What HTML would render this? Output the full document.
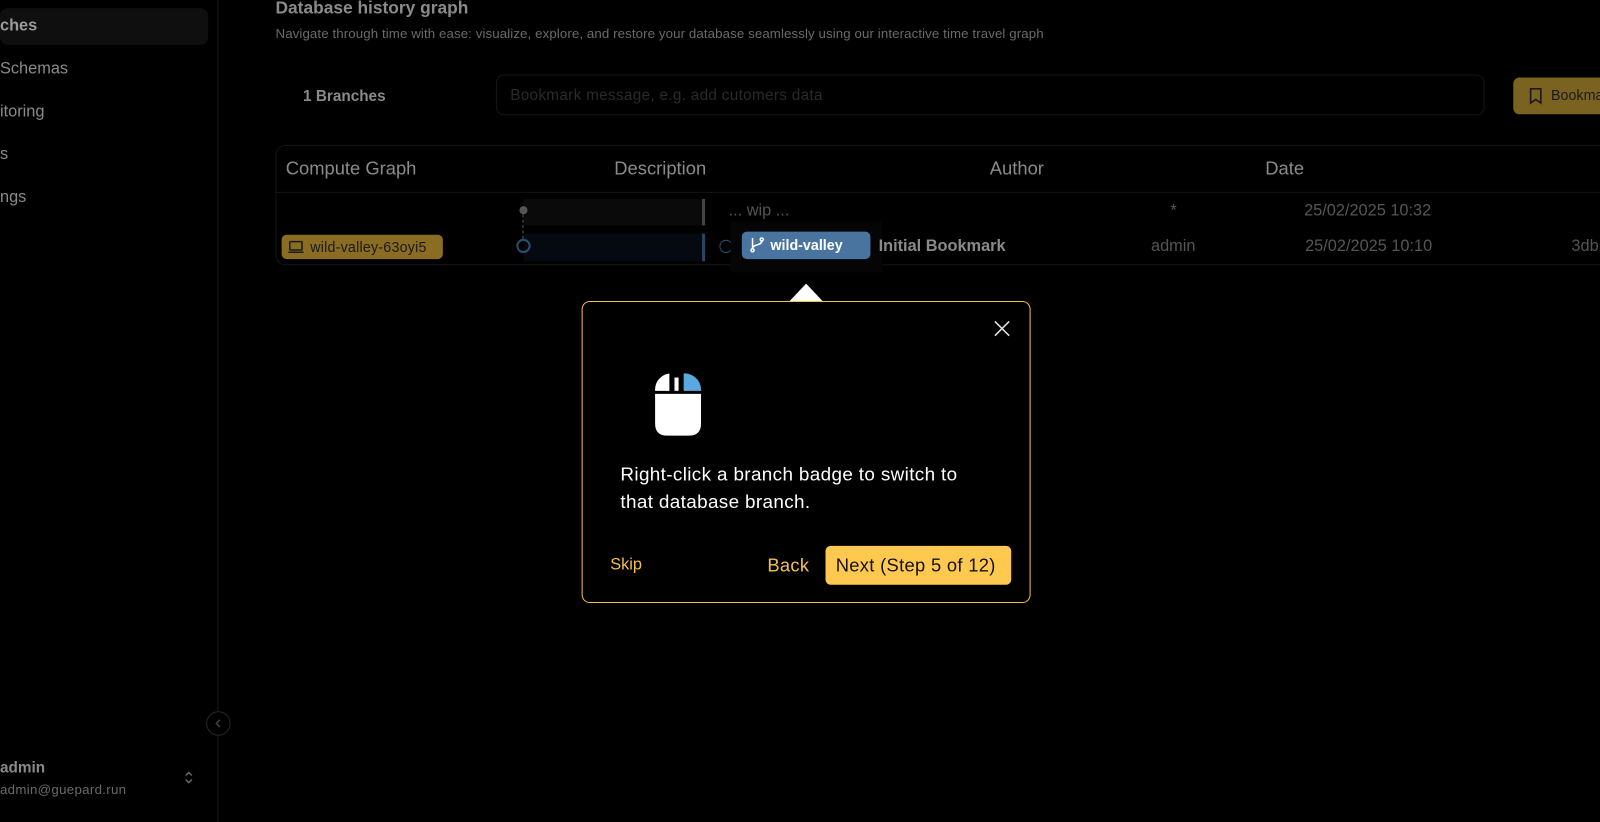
<!DOCTYPE html>
<html><head><meta charset="utf-8"><style>
*{box-sizing:border-box;margin:0;padding:0}
body{width:1600px;height:806px;background:#000;font-family:"Liberation Sans",sans-serif;position:relative;overflow:hidden;color:#888}
#w{position:absolute;left:0;top:0;width:1568px;height:790px;transform:scale(1.0204);transform-origin:0 0}
.a{position:absolute;white-space:nowrap}
</style></head><body><div id="w">
<div class="a" style="left:0;top:8px;width:204px;height:36px;background:#0f0f0f;border-radius:8px"></div>
<div class="a" style="left:0;top:17px;font-size:16px;font-weight:bold;color:#9a9a9a">ches</div>
<div class="a" style="left:0;top:59px;font-size:16px;color:#8a8a8a">Schemas</div>
<div class="a" style="left:0;top:101px;font-size:16px;color:#8a8a8a">itoring</div>
<div class="a" style="left:0;top:143px;font-size:16px;color:#8a8a8a">s</div>
<div class="a" style="left:0;top:185px;font-size:16px;color:#8a8a8a">ngs</div>
<div class="a" style="left:213px;top:0;width:1px;height:806px;background:#161616"></div>
<div class="a" style="left:202px;top:697px;width:24px;height:24px;border:1.5px solid #262626;border-radius:50%;background:#000"></div>
<svg class="a" style="left:207px;top:702px" width="14" height="14" viewBox="0 0 14 14" fill="none" stroke="#444" stroke-width="1.5"><path d="M8.5 3.5L5 7l3.5 3.5"/></svg>
<div class="a" style="left:0;top:744px;font-size:15px;font-weight:bold;color:#8a8a8a">admin</div>
<div class="a" style="left:0;top:766px;font-size:13px;color:#6a6a6a;letter-spacing:0.3px">admin@guepard.run</div>
<svg class="a" style="left:179px;top:754px" width="12" height="16" viewBox="0 0 12 16" fill="none" stroke="#666" stroke-width="1.5"><path d="M3 6l3-3 3 3M3 10l3 3 3-3"/></svg>

<div class="a" style="left:270px;top:-2px;font-size:17px;font-weight:bold;color:#8a8a8a">Database history graph</div>
<div class="a" style="left:270px;top:25px;font-size:13px;color:#6a6a6a;letter-spacing:0.1px">Navigate through time with ease: visualize, explore, and restore your database seamlessly using our interactive time travel graph</div>
<div class="a" style="left:297px;top:86px;font-size:15px;font-weight:bold;color:#8a8a8a">1 Branches</div>
<div class="a" style="left:486px;top:73px;width:969px;height:40px;border:1px solid #151515;border-radius:8px"></div>
<div class="a" style="left:500px;top:85px;font-size:15px;color:#2a2a2a;letter-spacing:0.3px">Bookmark message, e.g. add cutomers data</div>
<div class="a" style="left:1483px;top:76px;width:130px;height:36px;background:#7a6221;border-radius:6px"></div>
<svg class="a" style="left:1497px;top:85px" width="16" height="18" viewBox="0 0 16 18" fill="none" stroke="#1a1a1a" stroke-width="1.6"><path d="M3 2h10v14l-5-3.5L3 16z"/></svg>
<div class="a" style="left:1520px;top:85px;font-size:14px;color:#1a1a1a">Bookma</div>

<div class="a" style="left:270px;top:142px;width:1340px;height:118px;border:1px solid #151515;border-radius:10px"></div>
<div class="a" style="left:270px;top:188px;width:1340px;height:1px;background:#141414"></div>
<div class="a" style="left:280px;top:155px;font-size:18px;color:#8a8a8a">Compute Graph</div>
<div class="a" style="left:602px;top:155px;font-size:18px;color:#8a8a8a">Description</div>
<div class="a" style="left:970px;top:155px;font-size:18px;color:#8a8a8a">Author</div>
<div class="a" style="left:1240px;top:155px;font-size:18px;color:#8a8a8a">Date</div>

<div class="a" style="left:513px;top:195px;width:176px;height:26px;background:#0a0a0a"></div>
<div class="a" style="left:688px;top:195px;width:3px;height:26px;background:#444"></div>
<div class="a" style="left:513px;top:229px;width:176px;height:27px;background:#050a10"></div>
<div class="a" style="left:688px;top:229px;width:3px;height:27px;background:#2a4560"></div>
<div class="a" style="left:509px;top:202px;width:8px;height:8px;border-radius:50%;background:#555"></div>
<div class="a" style="left:512px;top:210px;width:0;height:24px;border-left:1.5px dashed #555"></div>
<div class="a" style="left:506px;top:234px;width:14px;height:14px;border-radius:50%;border:2px solid #2a4c6e"></div>
<div class="a" style="left:705px;top:235px;width:13px;height:13px;border-radius:50%;border:1.5px solid #2a4c6e"></div>
<div class="a" style="left:714px;top:198px;font-size:16px;color:#555">... wip ...</div>
<div class="a" style="left:716px;top:217px;width:148px;height:50px;background:#050505"></div>
<div class="a" style="left:727px;top:227px;width:126px;height:27px;background:#4a74a0;border-radius:5px"></div>
<svg class="a" style="left:733px;top:231px" width="18" height="18" viewBox="0 0 24 24" fill="none" stroke="#fff" stroke-width="2"><circle cx="6" cy="19" r="2"/><circle cx="18" cy="5" r="2"/><path d="M6 3v14M18 7c0 6-12 4-12 10"/></svg>
<div class="a" style="left:755px;top:232px;font-size:14px;font-weight:bold;color:#fff">wild-valley</div>
<div class="a" style="left:861px;top:233px;font-size:16px;font-weight:bold;color:#8a8a8a">Initial Bookmark</div>
<div class="a" style="left:1147px;top:198px;font-size:16px;color:#555">*</div>
<div class="a" style="left:1278px;top:198px;font-size:16px;color:#555">25/02/2025 10:32</div>
<div class="a" style="left:1128px;top:233px;font-size:16px;color:#555">admin</div>
<div class="a" style="left:1279px;top:233px;font-size:16px;color:#555">25/02/2025 10:10</div>
<div class="a" style="left:1540px;top:233px;font-size:16px;color:#555">3db</div>
<div class="a" style="left:276px;top:230px;width:158px;height:24px;background:#8a6d22;border-radius:5px"></div>
<svg class="a" style="left:281px;top:233px" width="18" height="18" viewBox="0 0 24 24" fill="none" stroke="#1a1a1a" stroke-width="2"><rect x="4" y="5" width="16" height="11" rx="1"/><path d="M2 19h20"/></svg>
<div class="a" style="left:304px;top:234px;font-size:14px;color:#1a1a1a;letter-spacing:0.2px">wild-valley-63oyi5</div>

<div class="a" style="left:773px;top:278px;width:0;height:0;border-left:17px solid transparent;border-right:17px solid transparent;border-bottom:18px solid #fff"></div>
<div class="a" style="left:570px;top:295px;width:440px;height:296px;border:1.5px solid #f5c04a;border-radius:8px;background:#000"></div>
<svg class="a" style="left:972px;top:312px" width="20" height="20" viewBox="0 0 20 20" stroke="#ddd" stroke-width="1.6"><path d="M3 3l14 14M17 3L3 17"/></svg>
<svg class="a" style="left:641px;top:363px" width="48" height="64" viewBox="0 0 48 64">
<path d="M1 20 A16 16 0 0 1 15 3 L15 20 Z" fill="#fff"/>
<rect x="20" y="7" width="4" height="13" fill="#fff"/>
<path d="M29 3 A16 16 0 0 1 46 20 L29 20 Z" fill="#5aa8e0"/>
<path d="M1 23 H46 V52 Q46 64 34 64 H13 Q1 64 1 52 Z" fill="#fff"/>
</svg>
<div class="a" style="left:608px;top:451px;font-size:18.5px;color:#fff;line-height:27px;letter-spacing:0.35px;font-weight:500">Right-click a branch badge to switch to<br>that database branch.</div>
<div class="a" style="left:598px;top:545px;font-size:16px;color:#f5c04a">Skip</div>
<div class="a" style="left:752px;top:544px;font-size:18px;color:#f5c04a;letter-spacing:0.3px">Back</div>
<div class="a" style="left:809px;top:535px;width:182px;height:38px;background:#ffc94f;border-radius:5px"></div>
<div class="a" style="left:819px;top:544px;font-size:18px;color:#111;letter-spacing:0.3px">Next (Step 5 of 12)</div>
</div></body></html>
